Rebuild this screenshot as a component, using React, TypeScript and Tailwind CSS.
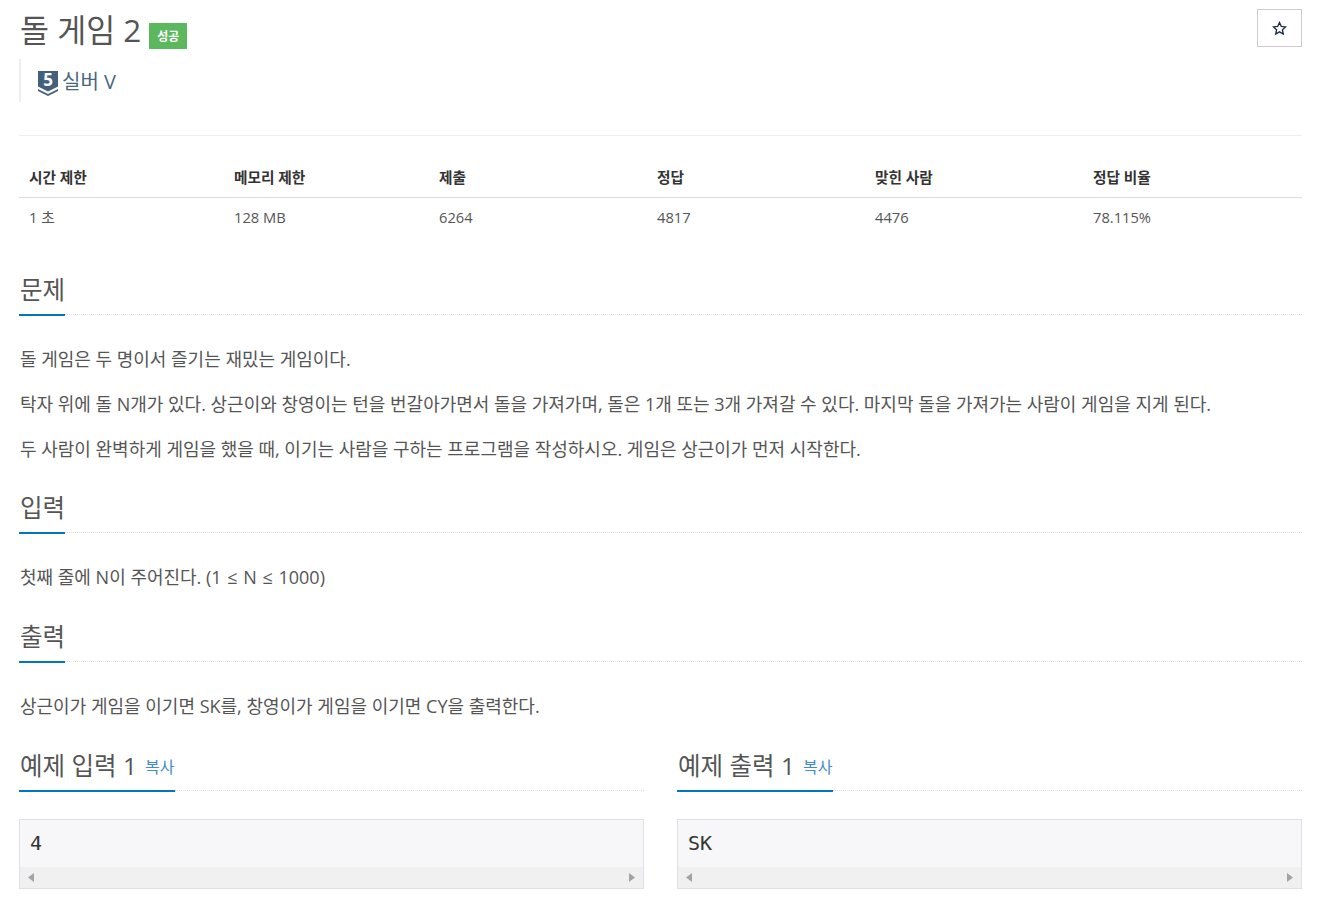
const font = "font-['Open_Sans','Noto_Sans_CJK_KR',sans-serif]";

function Headline({ title, copy }: { title: string; copy?: boolean }) {
  return (
    <div className="flex h-[43px] border-b border-dotted border-[#dddddd]">
      <h2 className={`shrink-0 h-[44px] border-b-2 border-[#0076c0] text-[24.5px] leading-[35px] font-normal text-[#555555] pl-px ${copy ? 'pr-px' : ''}`}>
        {title}
        {copy && <span className="ml-[8px] align-[2px] text-[16px] text-[#428bca]">복사</span>}
      </h2>
    </div>
  );
}

function Arrow({ dir }: { dir: 'left' | 'right' }) {
  return (
    <svg width="6" height="9" viewBox="0 0 6 9" fill="#a3a3a3">
      <path d={dir === 'left' ? 'M6 0v9L0 4.500z' : 'M0 0v9l6-4.500z'} />
    </svg>
  );
}

function Sample({ title, value }: { title: string; value: string }) {
  return (
    <div className="flex-1">
      <Headline title={title} copy />
      <div className="mt-[28px] h-[70px] border border-[#dfdfe6] bg-[#f7f7f9] flex flex-col">
        <div className="h-[47px] pl-[10px] pr-[9px] pt-[9px] font-['DejaVu_Sans_Mono',monospace] text-[20px] leading-[28px] text-[#333333]">{value}</div>
        <div className="h-[21px] bg-[#f0f0f0] flex items-center justify-between px-[8px]">
          <Arrow dir="left" />
          <Arrow dir="right" />
        </div>
      </div>
    </div>
  );
}

export default function App() {
  const stats = [
    { head: '시간 제한', value: '1 초', w: 'w-[205px]' },
    { head: '메모리 제한', value: '128 MB', w: 'w-[205px]' },
    { head: '제출', value: '6264', w: 'w-[218px]' },
    { head: '정답', value: '4817', w: 'w-[218px]' },
    { head: '맞힌 사람', value: '4476', w: 'w-[218px]' },
    { head: '정답 비율', value: '78.115%', w: 'flex-1' },
  ];

  return (
    <div className={`${font} w-[1325px] h-[904px] overflow-hidden bg-white px-[19px] text-[#333333]`}>
      <div className="w-[1283px]">
        <div className="flex justify-between h-[59px]">
          <div className="flex items-start pt-[9px]">
            <h1 className="pl-px text-[31.5px] leading-[42px] font-normal text-[#555555]">돌 게임 2</h1>
            <span className="ml-[8px] mt-[14px] w-[38px] h-[26px] pt-px bg-[#5cb85c] text-white text-[12px] font-bold flex items-center justify-center">성공</span>
          </div>
          <button className="mt-[9px] w-[45px] h-[38px] border border-[#cccccc] flex items-center justify-center">
            <svg width="15" height="15" viewBox="0 0 24 24" fill="none" stroke="#1c2a44" strokeWidth="2.2">
              <path d="M12 2.500l2.900 6.200 6.800.8-5 4.600 1.300 6.700-6-3.400-6 3.400 1.300-6.700-5-4.600 6.800-.8z" />
            </svg>
          </button>
        </div>

        <div className="h-[43px] border-l-2 border-[#eeeeee] pl-[17px] flex items-start pt-[9px] gap-[4px]">
          <svg className="mt-[3px] overflow-visible" width="20" height="25" viewBox="0 0 20 25">
            <path fill="#43607c" d="M0 0h20v15.500L10 20.500 0 15.500z" />
            <path fill="#43607c" d="M0 18l10 5 10-5v2l-10 5-10-5z" />
            <text x="10" y="15" textAnchor="middle" fill="#ffffff" fontSize="17" fontWeight="700" fontFamily="'Open Sans',sans-serif">5</text>
          </svg>
          <span className="text-[20px] leading-[27px] text-[#496580]">실버 V</span>
        </div>

        <div className="mt-[33px] border-t border-[#eeeeee]" />

        <div className="mt-[21px]">
          <div className="flex h-[41px] border-b border-[#dddddd]">
            {stats.map(s => (
              <div key={s.head} className={`${s.w} pl-[10px] pt-[10px] text-[14.7px] leading-[20px] font-bold text-[#333333]`}>{s.head}</div>
            ))}
          </div>
          <div className="flex h-[40px]">
            {stats.map(s => (
              <div key={s.head} className={`${s.w} pl-[10px] pt-[9px] text-[14.7px] leading-[20px] text-[#555555]`}>{s.value}</div>
            ))}
          </div>
        </div>

        <section className="mt-[34px]">
          <Headline title="문제" />
          <div className="mt-[32px] pl-px flex flex-col gap-[20px] text-[18px] leading-[25px] text-[#555555] tracking-[-0.01px]">
            <p>돌 게임은 두 명이서 즐기는 재밌는 게임이다.</p>
            <p>탁자 위에 돌 N개가 있다. 상근이와 창영이는 턴을 번갈아가면서 돌을 가져가며, 돌은 1개 또는 3개 가져갈 수 있다. 마지막 돌을 가져가는 사람이 게임을 지게 된다.</p>
            <p>두 사람이 완벽하게 게임을 했을 때, 이기는 사람을 구하는 프로그램을 작성하시오. 게임은 상근이가 먼저 시작한다.</p>
          </div>
        </section>

        <section className="mt-[28px]">
          <Headline title="입력" />
          <p className="mt-[32px] pl-px text-[18px] leading-[25px] text-[#555555]">
            첫째 줄에 N이 주어진다. (1 <span className="mx-px">≤</span> N <span className="mx-px">≤</span> 1000)
          </p>
        </section>

        <section className="mt-[29px]">
          <Headline title="출력" />
          <p className="mt-[32px] pl-px text-[18px] leading-[25px] text-[#555555]">상근이가 게임을 이기면 SK를, 창영이가 게임을 이기면 CY을 출력한다.</p>
        </section>

        <div className="mt-[29px] flex gap-[33px]">
          <Sample title="예제 입력 1" value="4" />
          <Sample title="예제 출력 1" value="SK" />
        </div>
      </div>
    </div>
  );
}
